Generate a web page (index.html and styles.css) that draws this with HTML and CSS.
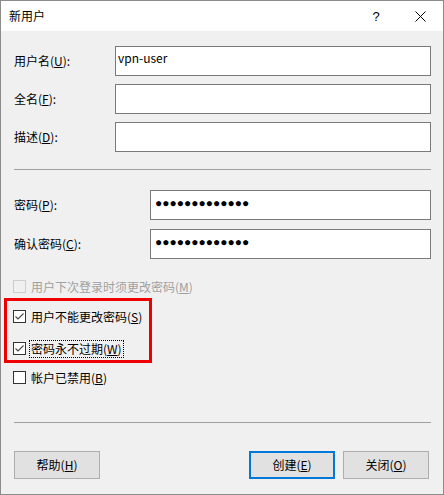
FILE: index.html
```html
<!DOCTYPE html>
<html lang="zh-CN">
<head>
<meta charset="utf-8">
<title>新用户</title>
<link rel="stylesheet" href="styles.css">
</head>
<body>
<div class="window">
  <div class="titlebar">
    <span class="title">新用户</span>
    <div class="caption-btns">
      <span class="cap cap-help">?</span>
      <span class="cap cap-close">
        <svg width="11" height="11" viewBox="0 0 11 11"><path d="M0.5 0.5 L10.5 10.5 M10.5 0.5 L0.5 10.5" stroke="#000" stroke-width="1" fill="none"/></svg>
      </span>
    </div>
  </div>
  <div class="content">
    <div class="fields fields-user">
      <span class="lbl">用户名(<u>U</u>):</span><div class="field">vpn-user</div>
      <span class="lbl">全名(<u>F</u>):</span><div class="field"></div>
      <span class="lbl">描述(<u>D</u>):</span><div class="field"></div>
    </div>
    <div class="sep sep-top"></div>
    <div class="fields fields-pw">
      <span class="lbl">密码(<u>P</u>):</span><div class="field pw">●●●●●●●●●●●●●</div>
      <span class="lbl">确认密码(<u>C</u>):</span><div class="field pw">●●●●●●●●●●●●●</div>
    </div>
    <div class="checks">
      <div class="cb-row disabled">
        <span class="box"></span><span class="cb-text">用户下次登录时须更改密码(<u>M</u>)</span>
      </div>
      <div class="cb-row row-s">
        <span class="box"><svg width="11" height="11" viewBox="0 0 11 11"><path d="M1.5 5.5 L4 8 L9.5 2.5" stroke="#444" stroke-width="1.1" fill="none"/></svg></span><span class="cb-text">用户不能更改密码(<u>S</u>)</span>
      </div>
      <div class="cb-row row-w">
        <span class="box"><svg width="11" height="11" viewBox="0 0 11 11"><path d="M1.5 5.5 L4 8 L9.5 2.5" stroke="#444" stroke-width="1.1" fill="none"/></svg></span><span class="cb-text focus">密码永不过期(<u>W</u>)</span>
      </div>
      <div class="cb-row row-b">
        <span class="box"></span><span class="cb-text">帐户已禁用(<u>B</u>)</span>
      </div>
    </div>
    <div class="sep sep-bottom"></div>
    <div class="buttons">
      <button class="btn">帮助(<u>H</u>)</button>
      <div class="btn-right">
        <button class="btn btn-default">创建(<u>E</u>)</button>
        <button class="btn">关闭(<u>O</u>)</button>
      </div>
    </div>
  </div>
  <div class="annot"></div>
</div>
</body>
</html>
```
FILE: styles.css
```css
* { box-sizing: border-box; }
html, body { margin: 0; padding: 0; background: #ffffff; }
body {
  font-family: "Noto Sans CJK SC", "Noto Sans", sans-serif;
  font-size: 12px;
  color: #000;
}
.window {
  position: relative;
  width: 444px;
  height: 495px;
  border: 1px solid #8c8c8c;
  background: #f0f0f0;
  display: flex;
  flex-direction: column;
}
.titlebar {
  height: 30px;
  background: #ffffff;
  display: flex;
  align-items: center;
  justify-content: space-between;
  padding-left: 8px;
}
.title { font-size: 12px; line-height: 16px; }
.caption-btns { display: flex; height: 30px; }
.cap {
  width: 45px;
  height: 30px;
  display: flex;
  align-items: center;
  justify-content: center;
}
.cap-help { font-family: "Liberation Sans", sans-serif; font-size: 13px; padding-left: 1px; }
.cap-close svg { display: block; }
.content {
  flex: 1;
  padding: 15px 12px 0 13px;
  display: flex;
  flex-direction: column;
}
.fields {
  display: grid;
  align-items: center;
}
.fields-user { grid-template-columns: 101px 1fr; row-gap: 8px; }
.fields-pw { grid-template-columns: 136px 1fr; row-gap: 9px; margin-top: 20px; }
.lbl { line-height: 16px; white-space: nowrap; }
.field {
  height: 30px;
  background: #ffffff;
  border: 1px solid #7a7a7a;
  padding: 3px 2px 0;
  line-height: 16px;
  white-space: nowrap;
  overflow: hidden;
}
.field.pw {
  font-family: "Liberation Sans", sans-serif;
  font-size: 12px;
  padding: 4px 4px 0;
  line-height: 16px;
}
.sep { height: 1px; background: #a0a0a0; }
.sep-top { margin-top: 17px; }
.sep-bottom { margin-top: 38px; }
.checks {
  margin-top: 21px;
  margin-left: -1px;
  display: flex;
  flex-direction: column;
}
.cb-row {
  height: 13px;
  display: flex;
  align-items: center;
}
.row-s { margin-top: 17px; }
.row-w { margin-top: 19px; }
.row-b { margin-top: 16px; }
.box {
  width: 13px;
  height: 13px;
  border: 1px solid #333333;
  background: #ffffff;
  display: flex;
  align-items: center;
  justify-content: center;
  flex: none;
}
.box svg { display: block; }
.cb-text {
  margin-left: 4px;
  padding: 0 1px;
  line-height: 16px;
  white-space: nowrap;
}
.cb-text.focus { outline: 1px dotted #000; outline-offset: 0; }
.disabled .box { border-color: #cccccc; background: #f0f0f0; }
.disabled .cb-text { color: #a0a0a0; }
.buttons {
  margin-top: 28px;
  margin-right: 2px;
  display: flex;
  justify-content: space-between;
}
.btn-right { display: flex; gap: 8px; }
.btn {
  width: 86px;
  height: 28px;
  background: #e1e1e1;
  border: 1px solid #adadad;
  font-family: "Noto Sans CJK SC", "Noto Sans", sans-serif;
  font-size: 12px;
  color: #000;
  padding: 0;
  line-height: 16px;
}
.btn-default { border: 2px solid #0078d7; }
.annot {
  position: absolute;
  left: 3px;
  top: 297px;
  width: 148px;
  height: 65px;
  border: 3px solid #ee0000;
  pointer-events: none;
}
```
